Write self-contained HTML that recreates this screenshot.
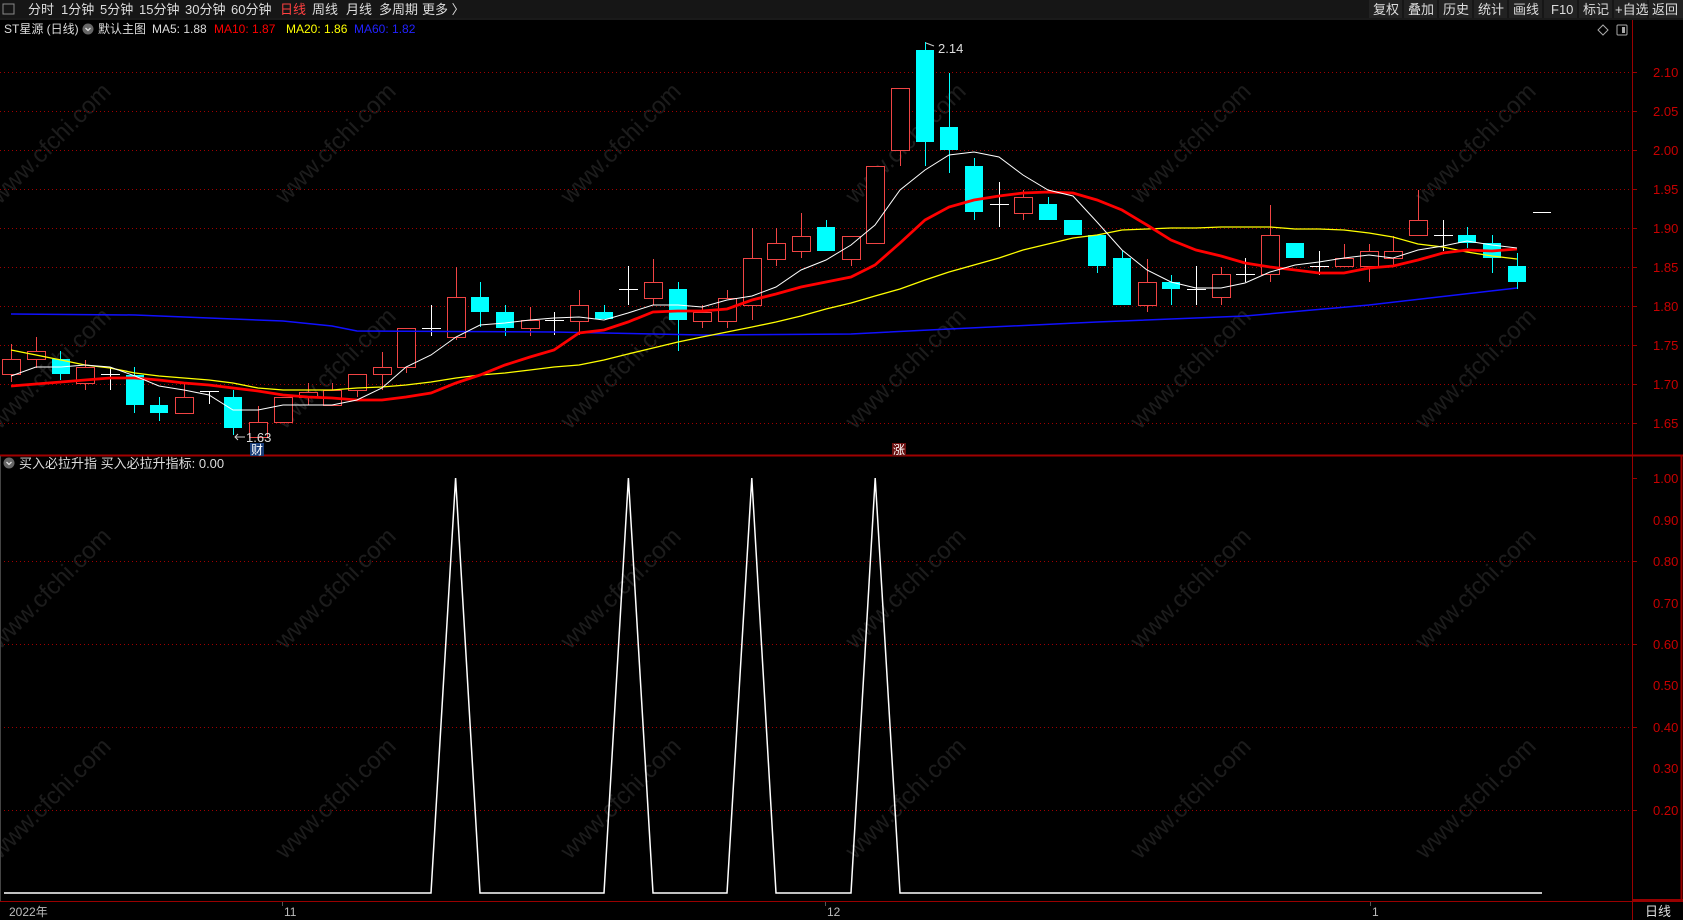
<!DOCTYPE html>
<html><head><meta charset="utf-8"><style>
html,body{margin:0;padding:0;background:#000;width:1683px;height:920px;overflow:hidden}
svg{display:block}
text{font-family:"Liberation Sans","Noto Sans CJK SC",sans-serif}
.rw{stroke:#f04444;stroke-width:1}
.rb{fill:#000;stroke:#f04444;stroke-width:1}
.cw{stroke:#00ffff;stroke-width:1}
.cb{fill:#00ffff}
.ww{stroke:#fff;stroke-width:1}
.wm{fill:#fff;fill-opacity:0.11;font-size:24px}
.ax{fill:#c80000;font-size:13px}
.tb{fill:#ddd;font-size:13px}
</style></head><body>
<svg width="1683" height="920" viewBox="0 0 1683 920" xmlns="http://www.w3.org/2000/svg">
<rect x="0" y="0" width="1683" height="18" fill="#161616"/>
<line x1="0" y1="19" x2="1683" y2="19" stroke="#333"/>
<!-- toolbar -->
<rect x="3" y="4" width="11" height="10" fill="none" stroke="#888"/>
<text class="tb" x="28" y="14">分时</text>
<text class="tb" x="61" y="14">1分钟</text>
<text class="tb" x="100" y="14">5分钟</text>
<text class="tb" x="139" y="14">15分钟</text>
<text class="tb" x="185" y="14">30分钟</text>
<text class="tb" x="231" y="14">60分钟</text>
<text x="280" y="14" font-size="13" fill="#ff4040">日线</text>
<text class="tb" x="312" y="14">周线</text>
<text class="tb" x="346" y="14">月线</text>
<text class="tb" x="379" y="14">多周期</text>
<text class="tb" x="422" y="14">更多 〉</text>
<g>
<rect x="1369" y="0" width="33" height="18" fill="#222"/><rect x="1404" y="0" width="33" height="18" fill="#222"/>
<rect x="1439" y="0" width="33" height="18" fill="#222"/><rect x="1474" y="0" width="33" height="18" fill="#222"/>
<rect x="1509" y="0" width="33" height="18" fill="#222"/><rect x="1544" y="0" width="33" height="18" fill="#222"/>
<rect x="1579" y="0" width="33" height="18" fill="#222"/><rect x="1614" y="0" width="33" height="18" fill="#222"/>
<rect x="1649" y="0" width="34" height="18" fill="#222"/>
<text class="tb" x="1373" y="14">复权</text><text class="tb" x="1408" y="14">叠加</text>
<text class="tb" x="1443" y="14">历史</text><text class="tb" x="1478" y="14">统计</text>
<text class="tb" x="1513" y="14">画线</text><text class="tb" x="1551" y="14">F10</text>
<text class="tb" x="1583" y="14">标记</text><text class="tb" x="1615" y="14">+自选</text>
<text class="tb" x="1652" y="14">返回</text>
</g>
<!-- title line -->
<text x="4" y="33" font-size="12" fill="#ddd">ST星源 (日线)</text>
<circle cx="88" cy="29" r="5.5" fill="#666"/><path d="M85.5 28l2.5 2.5 2.5-2.5" stroke="#ddd" fill="none" stroke-width="1.3"/>
<text x="98" y="33" font-size="12" fill="#ddd">默认主图</text>
<text x="152" y="33" font-size="12" fill="#ddd">MA5: 1.88</text>
<text x="214" y="33" font-size="12" fill="#ff0000">MA10: 1.87</text>
<text x="286" y="33" font-size="12" fill="#ffff00">MA20: 1.86</text>
<text x="354" y="33" font-size="12" fill="#2222ff">MA60: 1.82</text>
<path d="M1603 25l5 5-5 5-5-5z" fill="none" stroke="#aaa"/>
<rect x="1617" y="25" width="10" height="10" rx="1" fill="none" stroke="#aaa"/><rect x="1622" y="27" width="3" height="6" fill="#aaa"/>
<!-- watermarks -->
<g class="wm">
<text transform="translate(0,205) rotate(-45)" class="wm">www.cfchi.com</text>
<text transform="translate(285,205) rotate(-45)" class="wm">www.cfchi.com</text>
<text transform="translate(570,205) rotate(-45)" class="wm">www.cfchi.com</text>
<text transform="translate(855,205) rotate(-45)" class="wm">www.cfchi.com</text>
<text transform="translate(1140,205) rotate(-45)" class="wm">www.cfchi.com</text>
<text transform="translate(1425,205) rotate(-45)" class="wm">www.cfchi.com</text>
<text transform="translate(0,430) rotate(-45)" class="wm">www.cfchi.com</text>
<text transform="translate(285,430) rotate(-45)" class="wm">www.cfchi.com</text>
<text transform="translate(570,430) rotate(-45)" class="wm">www.cfchi.com</text>
<text transform="translate(855,430) rotate(-45)" class="wm">www.cfchi.com</text>
<text transform="translate(1140,430) rotate(-45)" class="wm">www.cfchi.com</text>
<text transform="translate(1425,430) rotate(-45)" class="wm">www.cfchi.com</text>
<text transform="translate(0,650) rotate(-45)" class="wm">www.cfchi.com</text>
<text transform="translate(285,650) rotate(-45)" class="wm">www.cfchi.com</text>
<text transform="translate(570,650) rotate(-45)" class="wm">www.cfchi.com</text>
<text transform="translate(855,650) rotate(-45)" class="wm">www.cfchi.com</text>
<text transform="translate(1140,650) rotate(-45)" class="wm">www.cfchi.com</text>
<text transform="translate(1425,650) rotate(-45)" class="wm">www.cfchi.com</text>
<text transform="translate(0,860) rotate(-45)" class="wm">www.cfchi.com</text>
<text transform="translate(285,860) rotate(-45)" class="wm">www.cfchi.com</text>
<text transform="translate(570,860) rotate(-45)" class="wm">www.cfchi.com</text>
<text transform="translate(855,860) rotate(-45)" class="wm">www.cfchi.com</text>
<text transform="translate(1140,860) rotate(-45)" class="wm">www.cfchi.com</text>
<text transform="translate(1425,860) rotate(-45)" class="wm">www.cfchi.com</text>
</g>
<!-- grid upper -->
<g stroke="#a00000" stroke-dasharray="1,3">
<line x1="0" x2="1632" y1="72.5" y2="72.5"/><line x1="0" x2="1632" y1="111.5" y2="111.5"/>
<line x1="0" x2="1632" y1="150.5" y2="150.5"/><line x1="0" x2="1632" y1="189.5" y2="189.5"/>
<line x1="0" x2="1632" y1="228.5" y2="228.5"/><line x1="0" x2="1632" y1="267.5" y2="267.5"/>
<line x1="0" x2="1632" y1="306.5" y2="306.5"/><line x1="0" x2="1632" y1="345.5" y2="345.5"/>
<line x1="0" x2="1632" y1="384.5" y2="384.5"/><line x1="0" x2="1632" y1="423.5" y2="423.5"/>
<line x1="0" x2="1632" y1="561.5" y2="561.5"/><line x1="0" x2="1632" y1="644.5" y2="644.5"/>
<line x1="0" x2="1632" y1="727.5" y2="727.5"/><line x1="0" x2="1632" y1="810.5" y2="810.5"/>
</g>
<!-- axes -->
<line x1="1632.5" y1="20" x2="1632.5" y2="920" stroke="#900"/>
<line x1="1681.5" y1="456" x2="1681.5" y2="901" stroke="#900" stroke-width="2"/>
<line x1="0" y1="455.5" x2="1683" y2="455.5" stroke="#a00000" stroke-width="2"/>
<line x1="0" y1="901.5" x2="1683" y2="901.5" stroke="#900"/>
<line x1="1632" y1="900" x2="1683" y2="900" stroke="#900" stroke-width="2"/>
<line x1="0.5" y1="456" x2="0.5" y2="901" stroke="#444"/>
<g stroke="#900">
<line x1="1632" x2="1637" y1="72.5" y2="72.5"/><line x1="1632" x2="1637" y1="111.5" y2="111.5"/>
<line x1="1632" x2="1637" y1="150.5" y2="150.5"/><line x1="1632" x2="1637" y1="189.5" y2="189.5"/>
<line x1="1632" x2="1637" y1="228.5" y2="228.5"/><line x1="1632" x2="1637" y1="267.5" y2="267.5"/>
<line x1="1632" x2="1637" y1="306.5" y2="306.5"/><line x1="1632" x2="1637" y1="345.5" y2="345.5"/>
<line x1="1632" x2="1637" y1="384.5" y2="384.5"/><line x1="1632" x2="1637" y1="423.5" y2="423.5"/>
<line x1="1632" x2="1637" y1="478.5" y2="478.5"/><line x1="1632" x2="1637" y1="561.5" y2="561.5"/>
<line x1="1632" x2="1637" y1="644.5" y2="644.5"/><line x1="1632" x2="1637" y1="727.5" y2="727.5"/>
<line x1="1632" x2="1637" y1="810.5" y2="810.5"/>
</g>
<g class="ax">
<text x="1653" y="77">2.10</text><text x="1653" y="116">2.05</text><text x="1653" y="155">2.00</text>
<text x="1653" y="194">1.95</text><text x="1653" y="233">1.90</text><text x="1653" y="272">1.85</text>
<text x="1653" y="311">1.80</text><text x="1653" y="350">1.75</text><text x="1653" y="389">1.70</text>
<text x="1653" y="428">1.65</text>
<text x="1653" y="483">1.00</text><text x="1653" y="525">0.90</text><text x="1653" y="566">0.80</text>
<text x="1653" y="608">0.70</text><text x="1653" y="649">0.60</text><text x="1653" y="690">0.50</text>
<text x="1653" y="732">0.40</text><text x="1653" y="773">0.30</text><text x="1653" y="815">0.20</text>
</g>
<!-- candles -->
<g>
<line class="rw" x1="11.5" x2="11.5" y1="344" y2="382"/><rect class="rb" x="2.5" y="359.5" width="18" height="15"/>
<line class="rw" x1="36.5" x2="36.5" y1="337" y2="368"/><rect class="rb" x="27.5" y="351.5" width="18" height="8"/>
<line class="cw" x1="60.5" x2="60.5" y1="351" y2="380"/><rect class="cb" x="52" y="359" width="18" height="15"/>
<line class="rw" x1="85.5" x2="85.5" y1="360" y2="390"/><rect class="rb" x="76.5" y="367.5" width="18" height="16"/>
<line class="ww" x1="110.5" x2="110.5" y1="367" y2="390"/><line class="ww" x1="101" x2="120" y1="374.5" y2="374.5"/>
<line class="cw" x1="134.5" x2="134.5" y1="367" y2="413"/><rect class="cb" x="126" y="375" width="18" height="30"/>
<line class="cw" x1="159.5" x2="159.5" y1="397" y2="421"/><rect class="cb" x="150" y="405" width="18" height="8"/>
<line class="rw" x1="184.5" x2="184.5" y1="383" y2="413"/><rect class="rb" x="175.5" y="397.5" width="18" height="16"/>
<line class="ww" x1="209.5" x2="209.5" y1="391" y2="404"/><line class="ww" x1="200" x2="219" y1="391.5" y2="391.5"/>
<line class="cw" x1="233.5" x2="233.5" y1="390" y2="435"/><rect class="cb" x="224" y="397" width="18" height="31"/>
<line class="rw" x1="258.5" x2="258.5" y1="406" y2="437"/><rect class="rb" x="249.5" y="422.5" width="18" height="15"/>
<rect class="rb" x="274.5" y="397.5" width="18" height="25"/>
<line class="rw" x1="308.5" x2="308.5" y1="383" y2="405"/><rect class="rb" x="299.5" y="392.5" width="18" height="5"/>
<line class="rw" x1="332.5" x2="332.5" y1="383" y2="405"/><rect class="rb" x="323.5" y="390.5" width="18" height="15"/>
<line class="rw" x1="357.5" x2="357.5" y1="374" y2="397"/><rect class="rb" x="348.5" y="374.5" width="18" height="16"/>
<line class="rw" x1="382.5" x2="382.5" y1="352" y2="390"/><rect class="rb" x="373.5" y="367.5" width="18" height="7"/>
<line class="rw" x1="406.5" x2="406.5" y1="328" y2="373"/><rect class="rb" x="397.5" y="328.5" width="18" height="39"/>
<line class="ww" x1="431.5" x2="431.5" y1="305" y2="336"/><line class="ww" x1="422" x2="441" y1="328.5" y2="328.5"/>
<line class="rw" x1="456.5" x2="456.5" y1="267" y2="340"/><rect class="rb" x="447.5" y="297.5" width="18" height="40"/>
<line class="cw" x1="480.5" x2="480.5" y1="282" y2="327"/><rect class="cb" x="471" y="297" width="18" height="15"/>
<line class="cw" x1="505.5" x2="505.5" y1="305" y2="336"/><rect class="cb" x="496" y="312" width="18" height="16"/>
<line class="rw" x1="530.5" x2="530.5" y1="307" y2="336"/><rect class="rb" x="521.5" y="320.5" width="18" height="8"/>
<line class="ww" x1="554.5" x2="554.5" y1="312" y2="335"/><line class="ww" x1="545" x2="564" y1="320.5" y2="320.5"/>
<line class="rw" x1="579.5" x2="579.5" y1="290" y2="335"/><rect class="rb" x="570.5" y="305.5" width="18" height="16"/>
<line class="cw" x1="604.5" x2="604.5" y1="305" y2="319"/><rect class="cb" x="595" y="312" width="18" height="7"/>
<line class="ww" x1="628.5" x2="628.5" y1="266" y2="305"/><line class="ww" x1="619" x2="638" y1="289.5" y2="289.5"/>
<line class="rw" x1="653.5" x2="653.5" y1="259" y2="305"/><rect class="rb" x="644.5" y="282.5" width="18" height="16"/>
<line class="cw" x1="678.5" x2="678.5" y1="282" y2="351"/><rect class="cb" x="669" y="289" width="18" height="31"/>
<line class="rw" x1="702.5" x2="702.5" y1="305" y2="328"/><rect class="rb" x="693.5" y="312.5" width="18" height="9"/>
<line class="rw" x1="727.5" x2="727.5" y1="290" y2="328"/><rect class="rb" x="718.5" y="298.5" width="18" height="23"/>
<line class="rw" x1="752.5" x2="752.5" y1="228" y2="320"/><rect class="rb" x="743.5" y="258.5" width="18" height="47"/>
<line class="rw" x1="776.5" x2="776.5" y1="228" y2="266"/><rect class="rb" x="767.5" y="243.5" width="18" height="16"/>
<line class="rw" x1="801.5" x2="801.5" y1="213" y2="258"/><rect class="rb" x="792.5" y="236.5" width="18" height="15"/>
<line class="cw" x1="826.5" x2="826.5" y1="220" y2="251"/><rect class="cb" x="817" y="227" width="18" height="24"/>
<line class="rw" x1="851.5" x2="851.5" y1="236" y2="266"/><rect class="rb" x="842.5" y="236.5" width="18" height="23"/>
<rect class="rb" x="866.5" y="166.5" width="18" height="77"/>
<line class="rw" x1="900.5" x2="900.5" y1="88" y2="166"/><rect class="rb" x="891.5" y="88.5" width="18" height="62"/>
<line class="cw" x1="925.5" x2="925.5" y1="42" y2="166"/><rect class="cb" x="916" y="50" width="18" height="92"/>
<line class="cw" x1="949.5" x2="949.5" y1="73" y2="173"/><rect class="cb" x="940" y="127" width="18" height="23"/>
<line class="cw" x1="974.5" x2="974.5" y1="158" y2="220"/><rect class="cb" x="965" y="166" width="18" height="46"/>
<line class="ww" x1="999.5" x2="999.5" y1="182" y2="227"/><line class="ww" x1="990" x2="1009" y1="204.5" y2="204.5"/>
<line class="rw" x1="1023.5" x2="1023.5" y1="190" y2="220"/><rect class="rb" x="1014.5" y="197.5" width="18" height="16"/>
<line class="cw" x1="1048.5" x2="1048.5" y1="197" y2="220"/><rect class="cb" x="1039" y="204" width="18" height="16"/>
<rect class="cb" x="1064" y="220" width="18" height="15"/>
<line class="cw" x1="1097.5" x2="1097.5" y1="235" y2="273"/><rect class="cb" x="1088" y="235" width="18" height="31"/>
<line class="cw" x1="1122.5" x2="1122.5" y1="251" y2="305"/><rect class="cb" x="1113" y="258" width="18" height="47"/>
<line class="rw" x1="1147.5" x2="1147.5" y1="259" y2="312"/><rect class="rb" x="1138.5" y="282.5" width="18" height="23"/>
<line class="cw" x1="1171.5" x2="1171.5" y1="275" y2="305"/><rect class="cb" x="1162" y="282" width="18" height="7"/>
<line class="ww" x1="1196.5" x2="1196.5" y1="266" y2="305"/><line class="ww" x1="1187" x2="1206" y1="289.5" y2="289.5"/>
<line class="rw" x1="1221.5" x2="1221.5" y1="267" y2="305"/><rect class="rb" x="1212.5" y="274.5" width="18" height="23"/>
<line class="ww" x1="1245.5" x2="1245.5" y1="258" y2="282"/><line class="ww" x1="1236" x2="1255" y1="274.5" y2="274.5"/>
<line class="rw" x1="1270.5" x2="1270.5" y1="205" y2="282"/><rect class="rb" x="1261.5" y="235.5" width="18" height="39"/>
<rect class="cb" x="1286" y="243" width="18" height="15"/>
<line class="ww" x1="1319.5" x2="1319.5" y1="251" y2="275"/><line class="ww" x1="1310" x2="1329" y1="266.5" y2="266.5"/>
<line class="rw" x1="1344.5" x2="1344.5" y1="244" y2="266"/><rect class="rb" x="1335.5" y="258.5" width="18" height="8"/>
<line class="rw" x1="1369.5" x2="1369.5" y1="244" y2="282"/><rect class="rb" x="1360.5" y="251.5" width="18" height="15"/>
<line class="rw" x1="1393.5" x2="1393.5" y1="236" y2="265"/><rect class="rb" x="1384.5" y="251.5" width="18" height="7"/>
<line class="rw" x1="1418.5" x2="1418.5" y1="190" y2="235"/><rect class="rb" x="1409.5" y="220.5" width="18" height="15"/>
<line class="ww" x1="1443.5" x2="1443.5" y1="220" y2="251"/><line class="ww" x1="1434" x2="1453" y1="235.5" y2="235.5"/>
<line class="cw" x1="1467.5" x2="1467.5" y1="227" y2="248"/><rect class="cb" x="1458" y="235" width="18" height="8"/>
<line class="cw" x1="1492.5" x2="1492.5" y1="235" y2="273"/><rect class="cb" x="1483" y="243" width="18" height="15"/>
<line class="cw" x1="1517.5" x2="1517.5" y1="253" y2="289"/><rect class="cb" x="1508" y="266" width="18" height="16"/>
<line x1="1533" x2="1551" y1="212.5" y2="212.5" stroke="#fff"/>
</g>
<!-- MAs -->
<polyline fill="none" stroke="#1010ff" stroke-width="1.5" points="11,314 135,315 209,318 283,321 332,326 357,331 554,332 702,335 851,334 949,329 1097,322 1245,316 1369,305 1517,288"/>
<polyline fill="none" stroke="#ffff00" stroke-width="1.3" points="11,350 36,355 61,360 85,365 110,368 135,373 159,376 184,378 209,380 233,383 258,388 283,390 308,390 332,390 357,388 382,387 406,385 431,382 456,378 480,375 505,373 530,370 554,367 579,365 604,360 628,354 653,348 678,342 702,337 727,332 752,327 776,322 801,316 826,309 851,303 875,296 900,289 925,280 949,272 974,265 999,258 1023,250 1048,244 1073,238 1097,235 1122,230 1147,229 1171,228 1196,228 1221,227 1245,227 1270,227 1295,229 1319,229 1344,230 1369,233 1393,237 1418,244 1443,247 1467,252 1492,256 1517,259"/>
<polyline fill="none" stroke="#ff0000" stroke-width="2.8" points="11,386 36,384 61,382 85,380 110,378 135,378 159,380 184,383 209,385 233,388 258,391 283,395 308,397 332,398 357,400 382,400 406,397 431,393 456,383 480,375 505,365 530,357 554,350 579,333 604,330 628,322 653,312 678,311 702,311 727,309 752,300 776,294 801,287 826,282 851,277 875,265 900,243 925,220 949,207 974,200 999,196 1023,193 1048,192 1073,193 1097,200 1122,210 1147,225 1171,240 1196,250 1221,256 1245,263 1270,267 1295,270 1319,273 1344,273 1369,268 1393,266 1418,260 1443,253 1467,250 1492,251 1517,249"/>
<polyline fill="none" stroke="#ffffff" stroke-width="1" points="11,376 36,367 61,367 85,365 110,367 135,376 159,386 184,390 209,395 233,410 258,410 283,405 308,405 332,405 357,400 382,388 406,367 431,355 456,337 480,325 505,323 530,320 554,318 579,317 604,320 628,313 653,305 678,305 702,307 727,300 752,296 776,287 801,270 826,260 851,245 875,225 900,190 925,170 949,155 974,152 999,157 1023,175 1048,190 1073,196 1097,222 1122,250 1147,270 1171,282 1196,288 1221,288 1245,283 1270,272 1295,265 1319,262 1344,258 1369,255 1393,258 1418,250 1443,246 1467,241 1492,245 1517,248"/>
<!-- labels -->
<path d="M926 43l8 3" stroke="#ccc" fill="none"/><text x="938" y="53" font-size="13" fill="#ddd">2.14</text>
<path d="M245 437h-10m3-3l-3 3 3 3" stroke="#ccc" fill="none"/><text x="246" y="442" font-size="13" fill="#ddd">1.63</text>
<rect x="250" y="443" width="14" height="13" fill="#1a3d78"/><text x="251" y="454" font-size="12" fill="#fff">财</text>
<rect x="892" y="443" width="14" height="13" fill="#6a1010"/><text x="893" y="454" font-size="12" fill="#fff">涨</text>
<!-- indicator -->
<circle cx="9" cy="463" r="5.5" fill="#666"/><path d="M6.5 462l2.5 2.5 2.5-2.5" stroke="#ddd" fill="none" stroke-width="1.3"/>
<text x="19" y="468" font-size="13" fill="#ddd">买入必拉升指 买入必拉升指标: 0.00</text>
<polyline fill="none" stroke="#fff" stroke-width="1.5" points="4,893 431,893 455.6,478 480,893 604,893 628.4,478 653,893 727,893 751.8,478 776,893 851,893 875.2,478 900,893 1542,893"/>
<!-- bottom date bar -->
<g stroke="#555"><line x1="282.5" x2="282.5" y1="902" y2="906"/><line x1="825.5" x2="825.5" y1="902" y2="906"/><line x1="1370.5" x2="1370.5" y1="902" y2="906"/></g>
<text x="9" y="916" font-size="12" fill="#bbb">2022年</text>
<text x="284" y="916" font-size="12" fill="#bbb">11</text>
<text x="827" y="916" font-size="12" fill="#bbb">12</text>
<text x="1372" y="916" font-size="12" fill="#bbb">1</text>
<text x="1645" y="916" font-size="13" fill="#ddd">日线</text>
</svg>
</body></html>
